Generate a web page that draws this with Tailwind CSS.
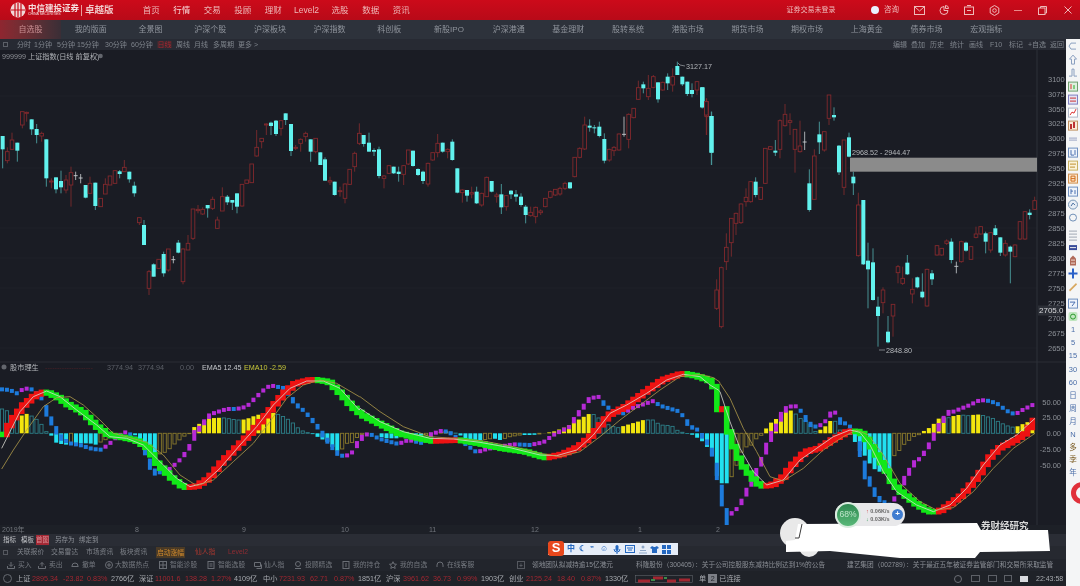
<!DOCTYPE html>
<html lang="zh-CN">
  <head>
    <meta charset="UTF-8" />
    <title>中信建投证券 卓越版</title>
    <script src="https://cdn.jsdelivr.net/npm/@tailwindcss/browser@4"></script>
  </head>
  <body class="bg-[#1a1c24] overflow-hidden">
    <div class="relative w-[1080px] h-[586px] overflow-hidden flex flex-col bg-[#1a1c24] text-[#a5a9b0] font-['Liberation_Sans','Noto_Sans_CJK_SC',sans-serif] blur-[0.45px]">
      <!-- Title bar -->
      <header class="h-[20px] shrink-0 flex items-center bg-gradient-to-b from-[#cc0a1a] to-[#b80a18] text-[#eeb9b9] text-[8.5px]">
        <div class="w-[136px] pl-[10px] flex items-center shrink-0">
          <svg class="w-[16px] h-[16px] shrink-0" viewBox="0 0 16 16"><circle cx="8" cy="8" r="7.500" fill="#f0d8d8"/><path d="M5 1v14M8 1v14M11 1v14M1 8h14" stroke="#c40a18" stroke-width="1.200"/></svg>
          <div class="ml-[2px] leading-none w-[52px]">
            <div class="text-[8.5px] font-bold text-[#f5dede] whitespace-nowrap">中信建投证券</div>
            <div class="text-[3.5px] mt-[1px] text-[#f5dede] whitespace-nowrap">CHINA SECURITIES</div>
          </div>
          <span class="ml-[1px] w-px h-[11px] bg-[#e8a0a0]"></span>
          <span class="ml-[3px] text-[9.5px] font-bold text-[#f0c8c8] whitespace-nowrap">卓越版</span>
        </div>
        <nav class="flex items-center">
          <a class="w-[30.5px] text-center">首页</a>
          <a class="w-[30.5px] text-center text-[#f7d6d6]">行情</a>
          <a class="w-[30.5px] text-center">交易</a>
          <a class="w-[30.5px] text-center">投顾</a>
          <a class="w-[30.5px] text-center">理财</a>
          <a class="w-[36px] text-center">Level2</a>
          <a class="w-[31px] text-center">选股</a>
          <a class="w-[30.5px] text-center">数据</a>
          <a class="w-[30.5px] text-center">资讯</a>
        </nav>
        <div class="ml-auto flex items-center">
          <span class="w-[50px] text-center whitespace-nowrap text-[7px]">证券交易未登录</span>
          <span class="ml-[35px] w-[8px] h-[8px] rounded-full bg-[#eaf0ff]"></span>
          <span class="ml-[5px] w-[15px] text-[7.5px]">咨询</span>
          <svg class="ml-[15px] w-[11px] h-[9px]" viewBox="0 0 11 9" fill="none" stroke="#eeb9b9"><rect x=".5" y=".5" width="10" height="8"/><path d="M1 1l4.500 4 4.500-4"/></svg>
          <svg class="ml-[14px] w-[10px] h-[10px]" viewBox="0 0 10 10" fill="none" stroke="#eeb9b9"><path d="M5 1.500a4 4 0 1 0 4 4H5z"/><path d="M6.500.5a3 3 0 0 1 3 3h-3z"/></svg>
          <svg class="ml-[15px] w-[10px] h-[10px]" viewBox="0 0 10 10" fill="none" stroke="#eeb9b9"><rect x=".5" y="2" width="9" height="7.500"/><path d="M3 .5h4M3 5.500h4"/></svg>
          <svg class="ml-[15px] w-[11px] h-[11px]" viewBox="0 0 11 11" fill="none" stroke="#eeb9b9"><path d="M5.500.5l4.300 2.500v5L5.500 10.500 1.200 8V3z"/><circle cx="5.500" cy="5.500" r="1.800"/></svg>
          <span class="ml-[14px] w-[8px] h-px bg-[#e88a8a]"></span>
          <svg class="ml-[16px] w-[9px] h-[9px]" viewBox="0 0 9 9" fill="none" stroke="#eeb9b9"><rect x=".5" y="2" width="6.500" height="6.500"/><path d="M2.500 2V.5h6V7H7"/></svg>
          <svg class="ml-[17px] mr-[8px] w-[8px] h-[8px]" viewBox="0 0 8 8" stroke="#eeb9b9"><path d="M.5.5l7 7M7.500.5l-7 7"/></svg>
        </div>
      </header>

      <!-- Market tabs -->
      <nav class="h-[19px] shrink-0 flex items-center bg-[#2d323b] text-[#8f949c] text-[8px]">
        <a class="w-[61px] h-full flex items-center justify-center text-[#c98f93] bg-gradient-to-r from-[#8f2630] to-[#3a2e36]">自选股</a>
        <a class="w-[59.700px] text-center">我的版面</a>
        <a class="w-[59.700px] text-center">全景图</a>
        <a class="w-[59.700px] text-center">沪深个股</a>
        <a class="w-[59.700px] text-center">沪深板块</a>
        <a class="w-[59.700px] text-center">沪深指数</a>
        <a class="w-[59.700px] text-center">科创板</a>
        <a class="w-[59.700px] text-center">新股IPO</a>
        <a class="w-[59.700px] text-center">沪深港通</a>
        <a class="w-[59.700px] text-center">基金理财</a>
        <a class="w-[59.700px] text-center">股转系统</a>
        <a class="w-[59.700px] text-center">港股市场</a>
        <a class="w-[59.700px] text-center">期货市场</a>
        <a class="w-[59.700px] text-center">期权市场</a>
        <a class="w-[59.700px] text-center">上海黄金</a>
        <a class="w-[59.700px] text-center">债券市场</a>
        <a class="w-[59.700px] text-center">宏观指标</a>
      </nav>

      <div class="flex-1 min-h-0 flex">
        <!-- Chart column -->
        <div class="flex-1 min-w-0 flex flex-col">
          <!-- Period toolbar -->
          <div class="h-[11px] shrink-0 flex items-center bg-[#272a33] text-[#7f848c] text-[7px] leading-none whitespace-nowrap">
            <span class="ml-[3px] w-[5px] h-[5px] border border-[#5c6068]"></span>
            <span class="ml-[9px] w-[17px]">分时</span>
            <span class="w-[23px]">1分钟</span>
            <span class="w-[20px]">5分钟</span>
            <span class="w-[28px]">15分钟</span>
            <span class="w-[26px]">30分钟</span>
            <span class="w-[26px]">60分钟</span>
            <span class="w-[15px] text-center text-[#a32630] bg-[#3a2a30]">日线</span>
            <span class="ml-[4px] w-[18px]">周线</span>
            <span class="w-[19px]">月线</span>
            <span class="w-[25px]">多周期</span>
            <span>更多 &gt;</span>
            <div class="ml-auto flex items-center">
              <span class="w-[18px]">编辑</span>
              <span class="w-[19px]">叠加</span>
              <span class="w-[20px]">历史</span>
              <span class="w-[19px]">统计</span>
              <span class="w-[21px]">画线</span>
              <span class="w-[19px]">F10</span>
              <span class="w-[19px]">标记</span>
              <span class="w-[22px]">+自选</span>
              <span class="w-[14px] mr-[2px]">返回</span>
            </div>
          </div>

          <!-- Chart canvas, drawn in page coordinates -->
          <svg id="chart" class="block w-[1066px] h-[475px] shrink-0" viewBox="0 50 1066 475">
            <g id="grid" stroke="#1f2129" stroke-width="1"></g>
            <g id="axis" fill="#8c9097" font-size="7.500"></g>
            <g id="candles"></g>
            <rect x="850" y="157.700" width="187" height="14" fill="#8b8b8b"/>
            <g id="macd"></g>
            <g fill="#b4b7bb" font-size="7.200">
              <text x="2" y="58.500" fill="#8d9096">999999 <tspan fill="#b0b3b8">上证指数(日线 前复权)</tspan></text>
              <circle cx="100.500" cy="56" r="2.300" fill="#63666d"/>
              <path d="M678 63l2 2 5 1" fill="none" stroke="#a5a8ad" stroke-width=".7"/>
              <text x="686" y="68.500">3127.17</text>
              <text x="852" y="155">2968.52 - 2944.47</text>
              <path d="M879 350h6" stroke="#a5a8ad" stroke-width=".7"/>
              <text x="886" y="353">2848.80</text>
              <circle cx="4" cy="367" r="2.500" fill="#63666d"/>
              <text x="10" y="370">股市理生</text>
              <text x="45" y="370" fill="#4a2226">--------------------</text>
              <text x="107" y="370" fill="#5c6068">3774.94</text>
              <text x="138" y="370" fill="#5c6068">3774.94</text>
              <text x="180" y="370" fill="#5c6068">0.00</text>
              <text x="202" y="370" fill="#c4c6ca">EMA5 12.45</text>
              <text x="244" y="370" fill="#c7c73a">EMA10 -2.59</text>
            </g>
            <rect x="1038" y="305.500" width="23" height="10" fill="#2c2f37"/>
            <text x="1039" y="313" fill="#d8d9dc" font-size="8">2705.0</text>
          </svg>

          <!-- Time axis -->
          <div class="relative h-[9px] shrink-0 text-[7px] leading-[9px] text-[#71757c] bg-[#1d2027]">
            <span class="absolute left-[2px]">2019年</span>
            <span class="absolute left-[135px]">8</span>
            <span class="absolute left-[242px]">9</span>
            <span class="absolute left-[341px]">10</span>
            <span class="absolute left-[429px]">11</span>
            <span class="absolute left-[531px]">12</span>
            <span class="absolute left-[638px]">1</span>
            <span class="absolute left-[716px]">2</span>
          </div>

          <!-- Indicator tabs -->
          <div class="h-[12px] shrink-0 flex items-center bg-[#2a2d35] text-[#8f939a] text-[6.5px] leading-none whitespace-nowrap">
            <span class="ml-[3px] w-[18px] text-[#c4c6ca]">指标</span>
            <span class="w-[15px] text-[#c4c6ca]">模板</span>
            <span class="w-[13px] h-[10px] leading-[10px] text-center bg-[#a32834] text-[#d98f96]">首图</span>
            <span class="ml-[6px] w-[24px]">另存为</span>
            <span>绑定到</span>
          </div>

          <!-- Info tabs -->
          <div class="h-[13px] shrink-0 flex items-center bg-[#262930] text-[#7e8289] text-[6.8px] leading-none whitespace-nowrap">
            <span class="ml-[3px] w-[5px] h-[5px] border border-[#55585f]"></span>
            <span class="ml-[9px] w-[34px]">关联报价</span>
            <span class="w-[35px]">交易雷达</span>
            <span class="w-[34px]">市场资讯</span>
            <span class="w-[36px]">板块资讯</span>
            <span class="w-[29px] h-[11px] leading-[11px] text-center bg-[#4a3a26] text-[#d08a2c]">启动涨幅</span>
            <span class="ml-[10px] w-[33px] text-[#a8372f]">仙人指</span>
            <span class="text-[#8e2c32]">Level2</span>
          </div>

          <!-- Trade shortcuts and news -->
          <div class="h-[12px] shrink-0 flex items-center bg-[#22252c] text-[#74787f] text-[6.8px] leading-none whitespace-nowrap">
            <span class="ml-[7px] w-[31px] flex items-center gap-[3px]"><svg class="w-[8px] h-[8px]" viewBox="0 0 8 8" fill="none" stroke="#6a6e75"><path d="M4 1v4M2 3.500L4 5.500 6 3.500M.5 5v2.500h7V5"/></svg>买入</span>
            <span class="w-[33px] flex items-center gap-[3px]"><svg class="w-[8px] h-[8px]" viewBox="0 0 8 8" fill="none" stroke="#6a6e75"><path d="M4 5.500v-4M2 3.500L4 1.500 6 3.500M.5 5v2.500h7V5"/></svg>卖出</span>
            <span class="w-[34px] flex items-center gap-[3px]"><svg class="w-[8px] h-[8px]" viewBox="0 0 8 8" fill="none" stroke="#6a6e75"><path d="M1 5a3 3 0 1 1 6 0M.5 5.500h7"/></svg>撤单</span>
            <span class="w-[54px] flex items-center gap-[2px]"><svg class="w-[8px] h-[8px]" viewBox="0 0 8 8" fill="none" stroke="#6a6e75"><circle cx="4" cy="4" r="3.500"/><path d="M4 2v4M2 4h4"/></svg>大数据热点</span>
            <span class="w-[48px] flex items-center gap-[3px]"><svg class="w-[8px] h-[8px]" viewBox="0 0 8 8" fill="none" stroke="#6a6e75"><rect x=".5" y=".5" width="7" height="7"/><path d="M.5 4h7M4 .5v7"/></svg>智能诊股</span>
            <span class="w-[47px] flex items-center gap-[3px]"><svg class="w-[8px] h-[8px]" viewBox="0 0 8 8" fill="none" stroke="#6a6e75"><rect x="1" y=".5" width="6" height="7"/><path d="M2.500 3h3M2.500 5h3"/></svg>智能选股</span>
            <span class="w-[40px] flex items-center gap-[2px]"><svg class="w-[8px] h-[8px]" viewBox="0 0 8 8" fill="none" stroke="#6a6e75"><path d="M.5 1.500h6v4h-6zM2.500 7.500h5v-4"/></svg>仙人指</span>
            <span class="w-[48px] flex items-center gap-[3px]"><svg class="w-[8px] h-[8px]" viewBox="0 0 8 8" fill="none" stroke="#6a6e75"><circle cx="4" cy="3" r="2.500"/><path d="M1 7.500h6"/></svg>投顾精选</span>
            <span class="w-[47px] flex items-center gap-[3px]"><svg class="w-[8px] h-[8px]" viewBox="0 0 8 8" fill="none" stroke="#6a6e75"><rect x="1" y=".5" width="6" height="7"/><path d="M4 2v4"/></svg>我的持仓</span>
            <span class="w-[47px] flex items-center gap-[3px]"><svg class="w-[8px] h-[8px]" viewBox="0 0 8 8" fill="none" stroke="#6a6e75"><path d="M4 .7l1 2.300 2.500.3L5.600 5 6.200 7.500 4 6.200 1.800 7.500 2.400 5 .5 3.300 3 3z"/></svg>我的自选</span>
            <span class="w-[81px] flex items-center gap-[3px]"><svg class="w-[8px] h-[8px]" viewBox="0 0 8 8" fill="none" stroke="#6a6e75"><path d="M1 4a3 3 0 1 1 6 0M1 4v2M7 4v2"/></svg>在线客服</span>
            <span class="w-[8px] h-[8px] text-center leading-[7px] border border-[#55585f]">+</span>
            <span class="ml-[7px] w-[104px] text-[#8b8f96] text-[6.7px]">领地团队拟减持逾15亿港元</span>
            <span class="w-[211px] text-[#8b8f96] text-[6.7px]">科隆股份（300405）：关于公司控股股东减持比例达到1%的公告</span>
            <span class="text-[#8b8f96] text-[6.7px]">建艺集团（002789）：关于最近五年被证券监管部门和交易所采取监管</span>
          </div>

          <!-- Index ticker -->
          <div class="h-[15px] shrink-0 flex items-center bg-[#1f2228] text-[#a8abb0] text-[7.2px] leading-none whitespace-nowrap">
            <span class="ml-[3px] w-[9px] h-[9px] rounded-full border border-[#666a71]"></span>
            <span class="ml-[4px] w-[16px]">上证</span>
            <span class="w-[31px] text-[#a32630]">2895.34</span>
            <span class="w-[24px] text-[#a32630]">-23.82</span>
            <span class="w-[24px] text-[#a32630]">0.83%</span>
            <span class="w-[27px]">2766亿</span>
            <span class="ml-[1px] w-[16px]">深证</span>
            <span class="w-[30px] text-[#a32630]">11001.6</span>
            <span class="w-[26px] text-[#a32630]">138.28</span>
            <span class="w-[23px] text-[#a32630]">1.27%</span>
            <span class="w-[29px]">4109亿</span>
            <span class="w-[16px]">中小</span>
            <span class="w-[31px] text-[#a32630]">7231.93</span>
            <span class="w-[24px] text-[#a32630]">62.71</span>
            <span class="w-[24px] text-[#a32630]">0.87%</span>
            <span class="w-[28px]">1851亿</span>
            <span class="w-[17px]">沪深</span>
            <span class="w-[30px] text-[#a32630]">3961.62</span>
            <span class="w-[24px] text-[#a32630]">36.73</span>
            <span class="w-[24px] text-[#a32630]">0.99%</span>
            <span class="w-[28px]">1903亿</span>
            <span class="w-[17px]">创业</span>
            <span class="w-[31px] text-[#a32630]">2125.24</span>
            <span class="w-[24px] text-[#a32630]">18.40</span>
            <span class="w-[24px] text-[#a32630]">0.87%</span>
            <span class="w-[30px]">1330亿</span>
            <svg class="w-[58px] h-[8px]" viewBox="0 0 58 8"><rect x=".5" y=".5" width="57" height="7" fill="none" stroke="#6b6e75" stroke-width=".5"/><path d="M3 6h12M18 3h10M32 6h9M44 5h11" stroke="#a32630" stroke-width="3"/><path d="M16 5h4M29 3h3" stroke="#3d8a4a" stroke-width="2"/></svg>
            <span class="ml-[6px]">单</span>
            <span class="ml-[2px] w-[9px] h-[9px] bg-[#7d8087] text-[#1f2228] text-center leading-[9px]">2</span>
            <span class="ml-[2px] w-[22px]">已连接</span>
            <div class="ml-auto flex items-center">
              <span class="w-[8px] h-[8px] rounded-full border border-[#6b6e75]"></span>
              <span class="ml-[9px] w-[9px] h-[7px] border border-[#5d6067]"></span>
              <span class="ml-[8px] w-[9px] h-[7px] border border-[#5d6067]"></span>
              <span class="ml-[7px] w-[8px] h-[7px] border border-[#5d6067]"></span>
              <span class="ml-[8px] w-[8px] h-[6px] bg-[#d8dade]"></span>
              <span class="ml-[8px] mr-[2px] w-[28px] text-[7px]">22:43:58</span>
            </div>
          </div>
        </div>

        <!-- Right icon rail -->
        <aside class="relative w-[14px] shrink-0 bg-[#f4f5f6] flex flex-col items-center text-[7.5px] leading-[13.2px] text-[#4b6ea8] pt-[1px]">
          <svg class="w-[10px] h-[13.2px]" viewBox="0 0 10 13" fill="none" stroke="#8aa0c0"><path d="M8 3H3L1 6l2 3h5"/></svg>
          <svg class="w-[10px] h-[13.2px]" viewBox="0 0 10 13" fill="none" stroke="#8aa0c0"><path d="M5 2L1.500 6H3.500v5h3V6h2z"/></svg>
          <svg class="w-[10px] h-[13.2px]" viewBox="0 0 10 13" fill="none" stroke="#8aa0c0"><path d="M1 10h3V3h2v7h3"/></svg>
          <svg class="w-[10px] h-[13.2px]" viewBox="0 0 10 13"><rect x=".5" y="2" width="9" height="9" fill="#dff0df" stroke="#70a070"/><path d="M3 4v5" stroke="#d33"/><path d="M6 5v4" stroke="#2a2"/></svg>
          <svg class="w-[10px] h-[13.2px]" viewBox="0 0 10 13"><rect x=".5" y="2" width="9" height="9" fill="#e5e5f5" stroke="#8080c0"/><path d="M2 5h6M2 8h6" stroke="#c33"/></svg>
          <svg class="w-[10px] h-[13.2px]" viewBox="0 0 10 13"><rect x=".5" y="2" width="9" height="9" fill="#fff" stroke="#b0b8c8"/><path d="M2 9l2-3 2 1 2-4" stroke="#d33" fill="none"/></svg>
          <svg class="w-[10px] h-[13.2px]" viewBox="0 0 10 13"><rect x=".5" y="2" width="9" height="9" fill="#fbecd8" stroke="#c09060"/><path d="M3 5v5M6 3v6" stroke="#b33" stroke-width="2"/></svg>
          <svg class="w-[10px] h-[13.2px]" viewBox="0 0 10 13"><path d="M1 6h8M1 8h8" stroke="#9aa4c4"/></svg>
          <svg class="w-[10px] h-[13.2px]" viewBox="0 0 10 13"><rect x=".5" y="2" width="9" height="9" fill="#eef3fb" stroke="#7090c0"/><path d="M3 4v5h3M7 4v5" stroke="#4a70b0" fill="none"/></svg>
          <svg class="w-[10px] h-[13.2px]" viewBox="0 0 10 13"><rect x=".5" y="2" width="9" height="9" fill="#fbf3d8" stroke="#c8b060"/><path d="M2 5h6M2 8h5" stroke="#c09030"/></svg>
          <svg class="w-[10px] h-[13.2px]" viewBox="0 0 10 13"><rect x=".5" y="2" width="9" height="9" fill="#fbe3c8" stroke="#d09050"/><path d="M3 4h4v5H3zM3 6.500h4" stroke="#d07020" fill="none"/></svg>
          <svg class="w-[10px] h-[13.2px]" viewBox="0 0 10 13"><rect x=".5" y="2" width="9" height="9" fill="#eef3fb" stroke="#7090c0"/><path d="M3 4v5M3 6h2M7 5v4" stroke="#4a70b0"/></svg>
          <svg class="w-[10px] h-[13.2px]" viewBox="0 0 10 13"><circle cx="5" cy="6.500" r="4.500" fill="#e8eef5" stroke="#7898b8"/><path d="M3 8l2-3 2 2" stroke="#4a70a0" fill="none"/></svg>
          <svg class="w-[10px] h-[13.2px]" viewBox="0 0 10 13" fill="none" stroke="#7090b8"><circle cx="5" cy="6.500" r="3.500"/></svg>
          <svg class="w-[10px] h-[13.2px] mt-[3px]" viewBox="0 0 10 13" stroke="#a0a8b4"><path d="M1 3h8M1 6h8M1 9h8M1 12h8"/></svg>
          <svg class="w-[10px] h-[13.2px]" viewBox="0 0 10 13"><rect x="1" y="4" width="8" height="5" fill="#3a4d9a"/><path d="M2 6.500h6" stroke="#eee"/></svg>
          <svg class="w-[10px] h-[13.2px]" viewBox="0 0 10 13"><path d="M5 1.500l3 3v7H2v-7z" fill="#b06a5a"/><path d="M3 6h4M3 9h4" stroke="#f0d8d0"/></svg>
          <svg class="w-[10px] h-[13.2px]" viewBox="0 0 10 13" stroke="#2a60c8" fill="#2a60c8"><path d="M5 1.500v10M.5 6.500h9" stroke-width="2"/></svg>
          <svg class="w-[10px] h-[13.2px]" viewBox="0 0 10 13"><path d="M1 10L8 3l1 1.500-7 7z" fill="#d8a860"/></svg>
          <svg class="w-[10px] h-[13.2px] mt-[3px]" viewBox="0 0 10 13"><rect x=".5" y="2" width="9" height="9" fill="#eef3fb" stroke="#7090c0"/><path d="M2 5h5L4 9" stroke="#4a70b0" fill="none"/></svg>
          <svg class="w-[10px] h-[13.2px]" viewBox="0 0 10 13"><rect x=".5" y="2" width="9" height="9" rx="2" fill="#bfe6bf"/><circle cx="5" cy="6.500" r="2.500" fill="none" stroke="#2f9a2f"/></svg>
          <span class="h-[13.2px]">1</span>
          <span class="h-[13.2px]">5</span>
          <span class="h-[13.2px]">15</span>
          <span class="h-[13.2px]">30</span>
          <span class="h-[12.8px]">60</span>
          <span class="h-[12.8px] mt-[1px]">日</span>
          <span class="h-[12.8px]">周</span>
          <span class="h-[12.8px]">月</span>
          <span class="h-[12.8px]">N</span>
          <span class="h-[12.8px] text-[#7a5a20]">多</span>
          <span class="h-[12.8px] text-[#7a5a20]">季</span>
          <span class="h-[12.8px]">年</span>
          <!-- Red badge cut by the window edge -->
          <span class="absolute left-[5px] top-[443px] w-[22px] h-[22px] rounded-full border-[5px] border-[#e0303a]"></span>
        </aside>
      </div>

      <!-- Painted-over watermark and floating widgets -->
      <svg class="absolute left-0 top-0 w-[1080px] h-[586px]" viewBox="0 0 1080 586">
        <circle cx="795" cy="533" r="15" fill="#e9e9e9"/>
        <circle cx="809" cy="547" r="10" fill="#e9e9e9"/>
        <path d="M798 524L977 523 981 530 1048 530 1050 551 980 552 975 558 900 558 830 551 786 552 786 541 795 540z" fill="#fff"/>
        <path d="M802 524l-3 14h-4" fill="none" stroke="#3a3a3a" stroke-width="1"/>
        <text x="981" y="529" font-size="9.500" fill="#d8d8d8" font-weight="700" font-family="Noto Sans CJK SC">券财经研究</text>
      </svg>

      <!-- Network speed widget -->
      <div class="absolute left-[835px] top-[503px] w-[70px] h-[23px] rounded-full bg-[#e8e8ea] flex items-center">
        <div class="w-[26px] h-[26px] shrink-0 rounded-full bg-gradient-to-b from-[#2f8a52] to-[#58b878] border-2 border-[#d9ecdf] text-[#bfe6cb] text-[8.5px] flex items-center justify-center">68%</div>
        <div class="ml-[5px] text-[5.5px] leading-[8px] font-bold text-[#666]">
          <div><span class="text-[#d04040]">↑</span> 0.06K/s</div>
          <div><span class="text-[#40a060]">↓</span> 0.03K/s</div>
        </div>
        <span class="absolute right-[2px] top-[6px] w-[11px] h-[11px] rounded-full bg-[#3f7cd0] text-white text-[8px] leading-[10px] text-center font-bold">+</span>
      </div>

      <!-- IME status bar -->
      <div class="absolute left-[548px] top-[543px] w-[130px] h-[12px] bg-[#e6edf8] flex items-center text-[#2468c0] text-[8px] leading-none font-bold">
        <span class="-mt-[2px] w-[16px] h-[15px] rounded-[3px] bg-[#e8481c] text-white text-[13px] text-center leading-[14px] font-bold shrink-0">S</span>
        <span class="ml-[3px] w-[10px]">中</span>
        <span class="ml-[2px] w-[11px]">☾</span>
        <span class="w-[10px]">”</span>
        <span class="w-[12px]">☺</span>
        <svg class="w-[10px] h-[10px]" viewBox="0 0 10 10"><rect x="3.500" y="1" width="3" height="6" rx="1.500" fill="#2468c0"/><path d="M2 5a3 3 0 0 0 6 0M5 8v2" stroke="#2468c0" fill="none"/></svg>
        <svg class="ml-[3px] w-[10px] h-[8px]" viewBox="0 0 10 8"><rect x=".5" y=".5" width="9" height="7" fill="none" stroke="#2468c0"/><path d="M2 3h6M3 5h4" stroke="#2468c0"/></svg>
        <svg class="ml-[3px] w-[10px] h-[9px]" viewBox="0 0 10 9"><circle cx="5" cy="2" r="1.500" fill="#8fa8c8"/><path d="M1 8h8M2 5.500h6" stroke="#8fa8c8"/></svg>
        <svg class="ml-[2px] w-[9px] h-[9px]" viewBox="0 0 9 9"><path d="M2 1l2 1h1l2-1 2 2-2 1v4H2V4L0 3z" fill="#2468c0"/></svg>
        <svg class="ml-[3px] w-[9px] h-[9px]" viewBox="0 0 9 9" fill="#2468c0"><rect width="4" height="4"/><rect x="5" width="4" height="4"/><rect y="5" width="4" height="4"/><rect x="5" y="5" width="4" height="4"/></svg>
      </div>
    </div>

    <script>
      const bg = "#1a1c24";
      const STEP = 4.93;

      // Candles as read off the chart: type, x, body top, body bottom, wick top, wick bottom
      // Each block is in 3x crop coordinates with its own origin
      const candleBlocks = [
        [0, 50, "c 8 258 298 258 355;r 22 305 332 292 340;r 36 270 298 248 300;c 52 278 302 278 335;r 67 185 225 185 235;r 80 187 190 185 215;c 95 208 238 208 255;c 110 237 255 222 280;r 125 250 258 245 275;c 139 268 385 268 410;r 154 393 396 385 415;c 168 382 418 382 430;c 183 393 412 362 430;r 198 390 420 375 430;r 213 368 405 350 470;d 227 377 379 365 390;d 242 384 386 372 400;c 257 405 443 405 445;r 270 400 430 380 430;c 286 398 468 398 480;r 302 445 470 445 470;r 316 403 432 385 432;r 330 378 405 378 405;r 345 362 400 362 400;c 359 364 372 360 385;r 373 352 365 330 365;c 388 365 388 365 398;c 403 407 430 395 440;r 418 503 518 503 525;c 432 525 585 510 585;r 447 665 715 660 735;c 461 643 680 640 680;r 476 628 655 628 655;c 491 612 670 605 680;r 505 597 660 597 665;d 520 629 631 618 640;c 535 578 608 570 610;r 549 597 695 595 703;r 564 580 600 555 600;r 579 477 565 477 570;r 594 478 482 465 490;r 608 478 492 472 495;c 623 465 475 465 503;r 638 448 475 440 480;r 652 510 535 500 537;r 667 440 483 412 483;c 682 440 457 435 465;c 697 450 458 450 480;c 711 430 470 430 490;r 726 403 468 403 470;r 740 390 400 390 400;r 755 342 398 342 398;r 770 292 318 240 320;r 785 265 275 265 295;r 799 222 225 220 255;c 813 218 228 215 255;c 828 212 252 210 258;r 843 212 235 210 257;c 857 190 210 190 225;c 873 222 303 222 318;r 887 292 295 285 300;r 902 268 280 265 305;r 917 250 260 245 275;c 932 268 305 268 335;r 947 265 305 265 310;c 961 307 345 307 345;c 975 328 392 322 392;r 990 392 396 380 405;c 1004 395 435 395 437;r 1020 422 425 410 440;r 1035 402 445 400 460;r 1049 358 403 358 405;r 1064 310 350 305 365;r 1078 250 280 220 285"],
        [360, 50, "c 11 255 282 255 290;c 27 278 305 248 305;c 42 300 305 295 318;c 57 298 378 290 385;r 72 378 385 375 415;r 87 347 370 345 372;c 101 350 370 350 372;c 116 365 372 350 395;r 131 347 373 345 405;r 145 300 342 300 345;c 159 302 348 302 350;c 174 357 375 355 378;c 189 365 393 362 402;r 204 340 402 338 410;r 218 308 330 308 332;r 233 280 308 252 322;c 248 278 305 278 308;r 263 298 305 295 325;c 277 275 330 268 332;c 292 355 428 355 430;r 307 420 428 418 458;c 321 420 437 420 455;r 335 428 432 410 445;c 350 425 460 410 462;r 365 430 465 428 470;r 380 382 440 380 440;c 395 393 425 393 427;r 410 435 440 428 458;c 424 433 472 402 492;r 439 437 470 435 482;c 453 422 433 420 447;c 468 433 440 420 455;c 483 440 465 430 470;c 497 470 495 465 520;r 512 487 497 470 500;r 527 472 500 470 520;r 542 483 488 478 495;r 556 445 470 445 472;r 571 425 442 422 445;r 586 418 435 418 438;r 600 415 432 410 437;r 615 400 415 395 420;c 630 397 415 397 417;r 644 322 380 322 382;r 659 295 322 292 325;r 674 225 297 200 300;c 689 227 233 208 245;c 703 232 235 225 250;c 718 230 258 215 262;c 733 267 332 250 340;r 748 298 330 296 335;r 762 292 302 288 318;r 777 252 300 250 302;d 792 253 258 200 260;r 806 193 268 190 295;r 821 175 203 175 205;r 835 113 148 92 150;c 850 103 115 95 130;r 865 115 140 75 150;r 880 80 112 75 115;c 894 97 148 97 158;r 908 97 120 95 122;c 923 80 100 70 120;r 938 80 105 55 125;c 952 48 75 35 75;c 967 80 103 80 108;c 982 95 132 95 138;c 996 120 132 100 142;r 1011 95 120 93 135;c 1026 112 172 112 175;r 1040 155 200 145 255;c 1054 198 308 185 345"],
        [700, 80, "c 8 22 82 22 85;r 19 65 105 55 165;c 35 108 218 95 255;r 50 630 685 598 690;r 64 563 740 560 745;r 79 502 545 460 570;r 94 415 488 415 530;r 108 400 430 398 465;r 123 372 428 370 432;r 138 352 365 325 380;r 152 305 365 305 368;c 167 305 345 292 352;r 182 322 358 322 360;r 196 205 310 205 312;r 211 200 208 198 210;c 226 212 218 180 228;r 240 122 208 118 235;r 255 103 137 72 140;r 270 122 127 100 165;r 285 148 208 148 278;r 300 198 215 122 218;d 314 186 188 155 210;c 328 310 390 268 395;r 343 228 358 208 358;c 358 163 187 125 222;r 373 155 210 155 215;r 387 45 115 45 135;c 402 105 112 82 122;c 417 197 277 195 285;r 432 180 322 180 345;c 447 172 230 158 232;c 460 290 310 275 345;r 475 375 527 338 530;c 490 360 553 360 555;c 504 542 568 488 685;c 519 547 660 505 662;c 534 680 708 650 800;r 549 630 668 622 700;c 564 755 787 708 790;r 579 673 708 672 770;r 594 560 578 555 610;r 608 595 610 560 615;c 622 548 583 525 585;r 637 628 642 595 670;c 652 592 622 590 625;c 667 635 652 580 655;r 681 568 678 566 680;c 696 580 598 570 615;r 711 497 525 495 527;r 725 505 525 505 527;r 740 483 490 478 495;c 754 485 540 475 550;d 769 559 561 545 580;r 784 485 545 482 548;c 798 488 512 485 515;r 813 500 538 498 540;r 828 462 472 440 475;r 842 440 462 438 464;c 857 460 485 455 520;r 872 458 510 456 518;c 886 445 465 435 467;c 901 472 518 472 528;r 916 490 525 480 530;c 931 500 515 497 610;r 945 495 530 493 532;r 960 425 477 423 480;r 975 395 477 393 480;c 989 398 405 388 418;r 1004 362 388 350 390"],
      ];

      function candlesSvg() {
        let out = "";
        candleBlocks.forEach(([ox, oy, rows]) => {
          rows.split(";").forEach((row) => {
            const p = row.split(" ");
            const x = ox + p[1] / 3;
            const [top, bot, wt, wb] = p.slice(2).map((v) => oy + v / 3);
            const wick = p[0] == "c" ? "#4c9ea0" : p[0] == "r" ? "#7c2b2e" : "#b8bcc0";
            out += `<path d="M${x} ${wt}V${wb}" stroke="${wick}" stroke-width=".9"/>`;
            if (p[0] == "c") {
              out += `<rect x="${x - 2}" y="${top}" width="4" height="${bot - top}" fill="#62f2ee"/>`;
            } else if (p[0] == "r") {
              out += `<rect x="${x - 1.8}" y="${top}" width="3.6" height="${bot - top}" fill="${bg}" stroke="#82292d" stroke-width=".9"/>`;
            } else {
              out += `<path d="M${x - 2} ${top}h4" stroke="#c8ccd0" stroke-width=".9"/>`;
            }
          });
        });
        return out;
      }

      // Lower panel series, also from the crops (x offset per crop, y origin 355)
      function series(a, b, c) {
        const conv = (off, str) =>
          str.split(" ").map((s) => {
            const [x, y] = s.split(",");
            return [off + x / 3, 355 + y / 3];
          });
        return [...conv(0, a), ...conv(360, b), ...conv(720, c)];
      }

      const thick = series(
        "5,240 30,195 65,150 100,120 130,110 165,125 200,150 240,170 285,215 320,240 350,245 400,255 440,280 460,320 490,350 510,370 545,397 580,395 620,370 660,320 700,280 750,230 800,170 845,115 880,85 930,73 980,80 1020,120 1050,155 1078,178",
        "0,180 50,205 110,235 150,245 210,258 290,255 350,265 420,280 490,290 550,308 600,298 650,275 690,240 740,180 790,155 850,110 900,75 960,55 1000,62 1040,75 1060,100 1075,190",
        "5,160 20,230 40,290 60,330 80,355 105,385 125,393 150,390 180,370 210,330 250,290 290,280 330,255 380,228 415,230 440,260 470,310 490,340 505,375 530,405 580,445 620,470 650,470 680,450 720,420 770,360 800,310 830,280 880,255 910,235 945,185"
      );
      const dots = series(
        "5,103 30,105 50,115 70,102 90,100 105,110 125,130 140,170 155,200 168,225 185,250 210,265 240,270 270,280 300,285 325,270 345,250 375,232 395,240 420,265 435,290 445,320 465,352 490,352 505,345 535,320 565,285 580,245 595,225 625,185 640,175 680,162 710,162 740,155 770,125 800,97 815,92 855,100 870,125 890,150 915,170 945,205 960,225 975,250 990,265 1005,290 1020,300 1035,305 1060,290 1078,255",
        "0,260 10,240 30,237 55,250 80,258 115,267 145,255 190,265 210,240 240,228 265,230 300,255 320,270 350,292 380,282 420,275 460,268 510,270 550,262 580,240 630,215 645,190 660,170 675,150 690,130 715,125 735,150 760,170 790,175 820,158 880,138 900,152 960,170 990,215 1010,222 1040,260 1060,300 1075,370",
        "5,420 20,490 35,475 50,462 65,440 80,410 95,380 120,330 135,290 150,250 165,225 180,190 195,165 210,155 225,152 245,170 265,205 285,215 310,208 328,180 345,172 360,198 375,205 390,215 410,235 430,335 445,370 460,405 475,430 490,440 510,450 535,415 548,385 565,355 578,330 592,318 607,302 622,280 637,255 650,225 665,205 680,175 700,170 725,160 750,150 780,135 810,138 840,150 855,165 870,172 885,178 900,170 915,160 930,155 945,145"
      );
      const hist = series(
        "0,165 10,160 25,170 45,195 75,175 90,180 105,190 120,200 135,228 150,235 165,262 195,270 210,265 255,265 270,265 285,270 300,262 325,250 335,240 350,235 400,235 425,262 440,290 460,300 475,298 500,290 520,270 550,245 570,235 580,218 600,205 625,190 665,188 680,190 710,195 725,195 745,190 770,180 800,175 815,172 840,180 860,190 880,205 900,225 920,232 940,238 960,250 985,262 1005,285 1020,290 1040,265 1060,262 1078,238",
        "0,240 20,235 50,235 70,250 90,250 110,250 130,240 150,235 180,245 200,240 260,228 290,235 320,252 350,255 365,255 400,250 420,255 450,245 480,240 520,240 550,235 580,230 620,215 645,200 690,175 705,180 735,205 760,215 775,218 800,210 850,195 880,195 900,210 935,212 950,225 975,235 1000,240 1035,265 1060,310 1075,385",
        "10,385 20,385 35,365 50,330 65,290 80,275 95,270 110,250 125,240 135,225 150,205 165,195 180,180 195,170 210,165 225,175 240,190 255,195 270,205 285,230 300,225 315,215 330,198 345,198 360,225 385,235 400,250 415,285 430,295 445,320 460,340 475,350 490,350 505,368 520,305 535,290 550,270 565,258 580,245 600,238 615,225 635,215 650,195 665,185 680,190 695,185 710,180 725,180 745,182 770,178 785,180 800,185 815,188 835,200 860,212 885,218 900,210 915,205 930,198 945,195"
      );
      const whiteLine = series(
        "5,280 30,230 60,170 100,125 140,108 180,125 230,165 290,210 330,245 380,250 430,270 480,320 530,370 570,395 610,385 660,340 720,270 770,215 820,150 870,100 920,78 970,78 1020,100 1078,165",
        "0,160 60,200 130,230 210,250 280,252 360,262 450,278 540,300 590,302 650,285 700,240 750,175 800,150 860,115 920,75 970,58 1020,65 1050,90 1075,105",
        "0,110 30,200 60,280 100,350 140,390 190,375 240,315 290,280 340,245 390,225 420,232 450,270 490,350 530,410 590,450 640,470 690,450 740,400 790,330 840,270 890,240 945,190"
      );
      const tanLine = series(
        "5,342 40,285 80,225 130,155 170,128 210,125 250,150 300,195 340,235 390,248 440,262 490,300 540,360 590,392 640,375 700,320 760,265 810,200 860,130 910,90 960,75 1010,85 1078,125",
        "0,125 60,170 130,215 210,245 280,250 370,258 460,275 540,295 600,305 660,290 720,245 780,195 840,150 900,105 960,65 1020,58 1060,68 1078,80",
        "0,85 30,130 70,220 110,290 150,365 190,378 250,340 310,285 370,245 410,225 445,240 490,300 540,385 600,440 650,465 700,458 760,410 820,340 880,280 945,235"
      );

      function at(line, x) {
        if (x <= line[0][0]) return line[0][1];
        for (let i = 1; i < line.length; i++) {
          if (x <= line[i][0]) {
            const [x0, y0] = line[i - 1];
            const [x1, y1] = line[i];
            return y0 + ((y1 - y0) * (x - x0)) / (x1 - x0 || 1);
          }
        }
        return line[line.length - 1][1];
      }

      function macdSvg() {
        const zero = 433.3;
        const xs = [];
        for (let x = 2; x <= 1035; x += STEP) xs.push(x);
        let bars = "", dotted = "", thickBars = "";
        xs.forEach((x, i) => {
          // Histogram: colour depends on side of zero and direction
          const y = at(hist, x);
          const prev = i ? at(hist, x - STEP) : y;
          const up = y < prev - 0.2;
          const top = Math.min(y, zero), h = Math.abs(y - zero);
          if (y < zero) {
            bars += up
              ? `<rect x="${x - 2}" y="${top}" width="4" height="${h}" fill="#f3e60e"/>`
              : `<rect x="${x - 1.6}" y="${top}" width="3.2" height="${h}" fill="none" stroke="#2d7f88" stroke-width=".9"/>`;
          } else {
            bars += up
              ? `<rect x="${x - 1.6}" y="${top}" width="3.2" height="${h}" fill="none" stroke="#8a7a2c" stroke-width=".9"/>`
              : `<rect x="${x - 2}" y="${top}" width="4" height="${h}" fill="#22e0f0"/>`;
          }
          // Dotted line
          const d = at(dots, x), dp = i ? at(dots, x - STEP) : d;
          const dh = Math.max(4, Math.abs(d - dp) * 0.9);
          dotted += `<rect x="${x - 2}" y="${d - dh / 2}" width="4" height="${dh}" fill="${d < dp ? "#b62ad6" : "#1d7bdc"}"/>`;
          // Thick line, a block spanning previous value to this one
          const t = at(thick, x), tp = i ? at(thick, x - STEP) : t;
          const th = Math.abs(t - tp) + 5.5;
          thickBars += `<rect x="${x - 2.8}" y="${Math.min(t, tp) - 2.7}" width="5.6" height="${th}" fill="${t < tp ? "#ee1212" : "#12e818"}"/>`;
        });
        const poly = (line, color) =>
          `<polyline points="${line.map((p) => p.join(",")).join(" ")}" fill="none" stroke="${color}" stroke-width=".8"/>`;
        return bars + dotted + thickBars + poly(whiteLine, "#d8d8d0") + poly(tanLine, "#b09a4a");
      }

      function gridSvg() {
        let g = "";
        [96, 168, 228, 258, 288, 348].forEach((y) => (g += `<path d="M0 ${y}H1037"/>`));
        g += `<path d="M0 362H1066" stroke="#2a2d35"/><path d="M1037 50V525" stroke="#2c3038"/>`;
        return g;
      }

      function axisSvg() {
        let a = "";
        for (let i = 0; i <= 18; i++) {
          const price = 3100 - i * 25, y = 79 + i * 14.95;
          a += `<text x="1048" y="${y + 2.6}">${price}</text>`;
        }
        [["50.00", 402], ["25.00", 417.5], ["0.00", 433], ["-25.00", 449], ["-50.00", 465]].forEach(([t, y]) => {
          a += `<text x="1061" y="${y + 2.6}" text-anchor="end">${t}</text>`;
        });
        return a;
      }

      document.getElementById("grid").innerHTML = gridSvg();
      document.getElementById("axis").innerHTML = axisSvg();
      document.getElementById("candles").innerHTML = candlesSvg();
      document.getElementById("macd").innerHTML = macdSvg();
    </script>
  </body>
</html>
